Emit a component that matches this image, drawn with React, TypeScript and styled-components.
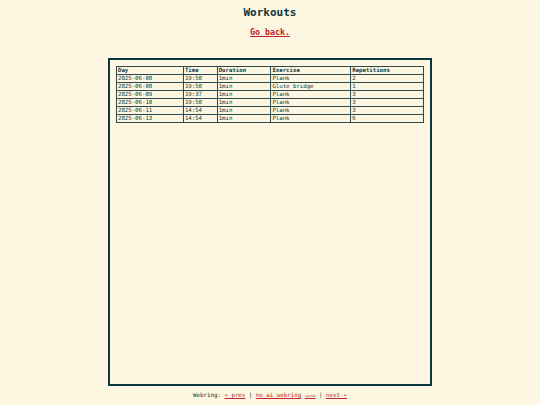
import React, { FC } from 'react';
import styled, { createGlobalStyle } from 'styled-components';

type WorkoutType = {
  day: string;
  time: string;
  duration: string;
  exercise: string;
  repetitions: number;
};

const workouts: WorkoutType[] = [
  { day: '2025-06-08', time: '19:50', duration: '1min', exercise: 'Plank', repetitions: 2 },
  { day: '2025-06-08', time: '19:50', duration: '1min', exercise: 'Glute bridge', repetitions: 1 },
  { day: '2025-06-09', time: '19:37', duration: '1min', exercise: 'Plank', repetitions: 3 },
  { day: '2025-06-10', time: '19:50', duration: '1min', exercise: 'Plank', repetitions: 3 },
  { day: '2025-06-11', time: '14:54', duration: '1min', exercise: 'Plank', repetitions: 3 },
  { day: '2025-06-13', time: '14:54', duration: '1min', exercise: 'Plank', repetitions: 6 },
];

const GlobalStyle = createGlobalStyle`
  html, body {
    margin: 0;
    padding: 0;
    background: #fdf7e1;
  }
  body {
    font-family: "DejaVu Sans Mono", "Liberation Mono", monospace;
    color: #0a3640;
  }
`;

const Page = styled.main`
  display: flex;
  flex-direction: column;
  align-items: center;
  padding-top: 6px;
`;

const Title = styled.h1`
  margin: 0;
  font-size: 11px;
  line-height: 14px;
  font-weight: bold;
`;

const BackLink = styled.a`
  margin-top: 7px;
  font-size: 8.3px;
  line-height: 10px;
  font-weight: bold;
  color: #c0242c;
  text-decoration: underline;
`;

const Panel = styled.section`
  box-sizing: border-box;
  width: 60%;
  height: 328px;
  margin-top: 21px;
  padding: 6px;
  border: 2px solid #0a3640;
`;

const Table = styled.table`
  width: 100%;
  border-collapse: collapse;
  font-size: 5.7px;
  line-height: 7px;
`;

const columnWidths = ['21.8%', '11%', '17.5%', '26%', '23.7%'];

const Cell = styled.td<{ $head?: boolean }>`
  border: 1px solid #2a4a50;
  padding: 0 1px;
  text-align: left;
  white-space: nowrap;
  font-weight: ${(p) => (p.$head ? 'bold' : 'normal')};
`;

const Footer = styled.footer`
  margin-top: 4px;
  font-size: 5.8px;
  line-height: 10px;
  a {
    color: #c0242c;
    text-decoration: underline;
  }
  small {
    font-size: 3px;
  }
`;

const headers = ['Day', 'Time', 'Duration', 'Exercise', 'Repetitions'];

const App: FC = () => (
  <>
    <GlobalStyle />
    <Page>
      <Title>Workouts</Title>
      <BackLink href="#">Go back.</BackLink>
      <Panel>
        <Table>
          <thead>
            <tr>
              {headers.map((h, i) => (
                <Cell as="th" $head key={h} style={{ width: columnWidths[i] }}>
                  {h}
                </Cell>
              ))}
            </tr>
          </thead>
          <tbody>
            {workouts.map((w, i) => (
              <tr key={i}>
                <Cell>{w.day}</Cell>
                <Cell>{w.time}</Cell>
                <Cell>{w.duration}</Cell>
                <Cell>{w.exercise}</Cell>
                <Cell>{w.repetitions}</Cell>
              </tr>
            ))}
          </tbody>
        </Table>
      </Panel>
      <Footer>
        Webring: <a href="#">« prev</a> | <a href="#">no ai webring</a>{' '}
        <a href="#"><small>random</small></a> | <a href="#">next »</a>
      </Footer>
    </Page>
  </>
);

export default App;
